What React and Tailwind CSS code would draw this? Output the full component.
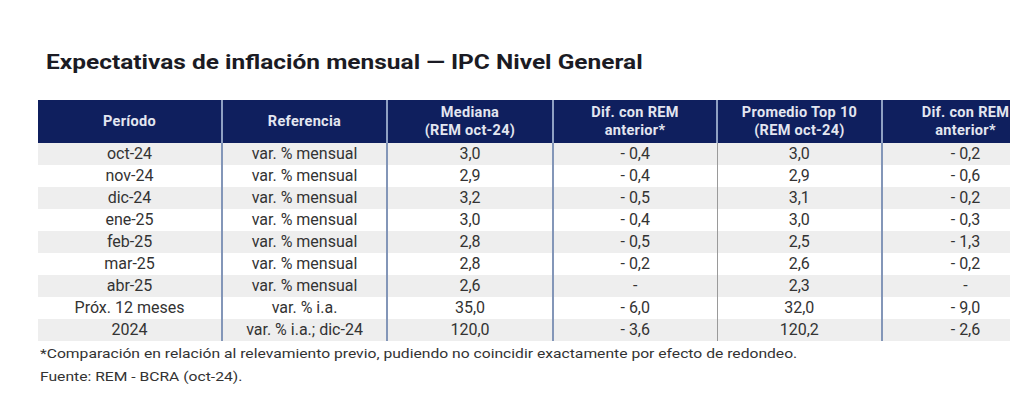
import React from 'react';

const rows = [
  ['oct-24', 'var. % mensual', '3,0', '- 0,4', '3,0', '- 0,2'],
  ['nov-24', 'var. % mensual', '2,9', '- 0,4', '2,9', '- 0,6'],
  ['dic-24', 'var. % mensual', '3,2', '- 0,5', '3,1', '- 0,2'],
  ['ene-25', 'var. % mensual', '3,0', '- 0,4', '3,0', '- 0,3'],
  ['feb-25', 'var. % mensual', '2,8', '- 0,5', '2,5', '- 1,3'],
  ['mar-25', 'var. % mensual', '2,8', '- 0,2', '2,6', '- 0,2'],
  ['abr-25', 'var. % mensual', '2,6', '-', '2,3', '-'],
  ['Próx. 12 meses', 'var. % i.a.', '35,0', '- 6,0', '32,0', '- 9,0'],
  ['2024', 'var. % i.a.; dic-24', '120,0', '- 3,6', '120,2', '- 2,6'],
];

const widths = ['w-[184px]', 'w-[165px]', 'w-[166px]', 'w-[164px]', 'w-[165px]', 'w-[166px]'];

// divider on the right of each body column (index 3 is the thin gray one)
const bodyBorders = [
  'border-r-2 border-[#8396b8]',
  'border-r-2 border-[#8396b8]',
  'border-r-2 border-[#8396b8]',
  'border-r border-[#9a9a9a]',
  'border-r-2 border-[#8396b8]',
  '',
];

const headers = [
  ['Período'],
  ['Referencia'],
  ['Mediana', '(REM oct-24)'],
  ['Dif. con REM', 'anterior*'],
  ['Promedio Top 10', '(REM oct-24)'],
  ['Dif. con REM', 'anterior*'],
];

export default function App() {
  return (
    <div className="w-[1024px] h-[417px] bg-white overflow-hidden font-['Roboto',sans-serif] text-[#333]">
      <h1 className="pl-[46px] pt-[47px] text-[21px] leading-[30px] font-bold text-[#1b1b24] whitespace-nowrap">
        <span className="inline-block origin-left scale-x-[1.165]">
          Expectativas de inflación mensual — IPC Nivel General
        </span>
      </h1>

      <div className="ml-[38px] mt-[23px] w-[972px] overflow-hidden">
        <table className="table-fixed border-collapse w-[1010px]">
          <thead>
            <tr className="bg-[#0f1f5e] h-[43px]">
              {headers.map((h, i) => (
                <th key={i}
                  className={`${widths[i]} p-0 text-center align-middle text-[14.5px] leading-[18px] tracking-[0.3px] font-bold text-[#e3e6f0] whitespace-nowrap ${i < 5 ? 'border-r-2 border-[#8fa0c2]' : ''}`}>
                  {h.map((line) => <div key={line}>{line}</div>)}
                </th>
              ))}
            </tr>
          </thead>
          <tbody>
            {rows.map((r, ri) => (
              <tr key={ri} className={`h-[22px] ${ri % 2 === 0 ? 'bg-[#eeeeee]' : 'bg-white'}`}>
                {r.map((c, ci) => (
                  <td key={ci}
                    className={`p-0 text-center align-middle text-[16px] leading-[22px] whitespace-nowrap ${bodyBorders[ci]}`}>
                    {c}
                  </td>
                ))}
              </tr>
            ))}
          </tbody>
        </table>
      </div>

      <div className="pl-[40px] pt-[1px] text-[13.5px] leading-[23px] whitespace-nowrap">
        <p><span className="inline-block origin-left scale-x-[1.16]">*Comparación en relación al relevamiento previo, pudiendo no coincidir exactamente por efecto de redondeo.</span></p>
        <p><span className="inline-block origin-left scale-x-[1.16]">Fuente: REM - BCRA (oct-24).</span></p>
      </div>
    </div>
  );
}
